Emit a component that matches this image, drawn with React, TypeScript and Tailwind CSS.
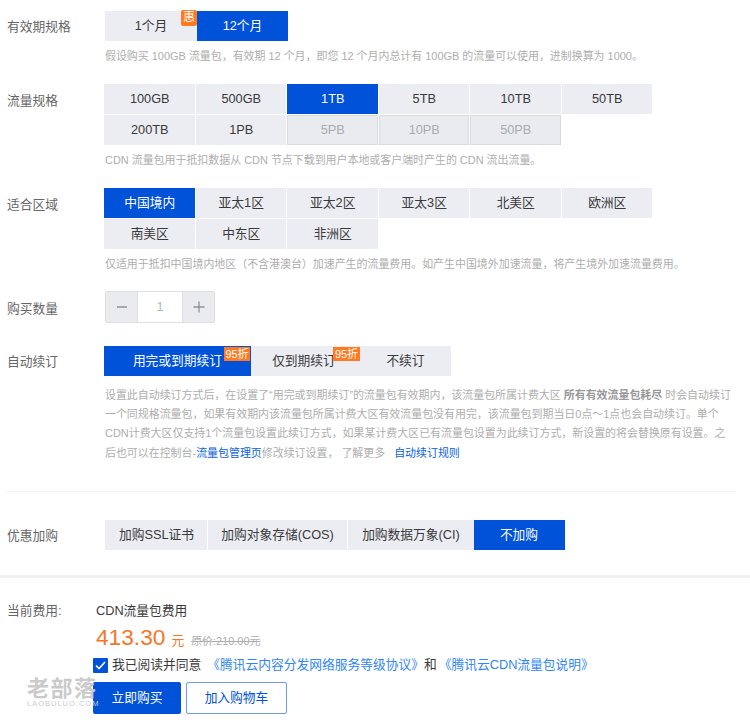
import React from "react";

const F = { fontFamily: '"Liberation Sans", "Noto Sans CJK SC", sans-serif' };

function Cell({ children, active, disabled, cls = "" }: { children: React.ReactNode; active?: boolean; disabled?: boolean; cls?: string }) {
  const tone = active
    ? "bg-[#0052d9] text-white"
    : disabled
      ? "bg-[#e9ebee] text-[#a8abb0] border border-[#d8dade]"
      : "bg-[#ebedf2] text-[#3a3a3a]";
  return <div className={`relative h-[30px] flex items-center justify-center text-[12.75px] whitespace-nowrap ${tone} ${cls}`}>{children}</div>;
}

function Badge({ children, cls = "" }: { children: React.ReactNode; cls?: string }) {
  return <span className={`absolute flex items-center justify-center bg-[#ff7a20] text-white leading-none ${cls}`}>{children}</span>;
}

function Row({ label, children, cls = "", labelCls = "pt-[1px]" }: { label: string; children: React.ReactNode; cls?: string; labelCls?: string }) {
  return (
    <div className={`flex ${cls}`}>
      <div className={`w-[104px] shrink-0 pl-[7px] h-[30px] flex items-center text-[12.75px] text-[#666666] ${labelCls}`}>{label}</div>
      <div className="flex-1 min-w-0">{children}</div>
    </div>
  );
}

function Hint({ children, cls = "" }: { children: React.ReactNode; cls?: string }) {
  return <p className={`text-[10.95px] leading-[18px] text-[#aeaeae] whitespace-nowrap pl-[1px] ${cls}`}>{children}</p>;
}

const specs1 = ["100GB", "500GB", "1TB", "5TB", "10TB", "50TB", "200TB", "1PB"];
const specs2 = ["5PB", "10PB", "50PB"];
const regions = ["中国境内", "亚太1区", "亚太2区", "亚太3区", "北美区", "欧洲区", "南美区", "中东区", "非洲区"];

export default function App() {
  return (
    <div style={F} className="w-[750px] h-[725px] overflow-hidden bg-white relative">
      <div className="pt-[11px]">
        <Row label="有效期规格">
          <div className="flex pl-[1px]">
            <Cell cls="w-[92px]">
              1个月
              <Badge cls="-top-[1px] right-0 w-[16px] h-[16px] rounded-[2px] text-[11.5px] bg-[#ff7a00]">惠</Badge>
            </Cell>
            <Cell active cls="w-[91px]">12个月</Cell>
          </div>
          <Hint cls="mt-[6px]">假设购买 100GB 流量包，有效期 12 个月，即您 12 个月内总计有 100GB 的流量可以使用，进制换算为 1000。</Hint>
        </Row>

        <Row label="流量规格" cls="mt-[19px]" labelCls="pt-[3px]">
          <div className="grid grid-cols-6 gap-[1px] w-[548px]">
            {specs1.map((s) => (
              <Cell key={s} active={s === "1TB"} cls="pl-[1px]">{s}</Cell>
            ))}
            {specs2.map((s) => (
              <Cell key={s} disabled cls="pl-[1px]">{s}</Cell>
            ))}
          </div>
          <Hint cls="mt-[6px]">CDN 流量包用于抵扣数据从 CDN 节点下载到用户本地或客户端时产生的 CDN 流出流量。</Hint>
        </Row>

        <Row label="适合区域" cls="mt-[19px]" labelCls="pt-[3px]">
          <div className="grid grid-cols-6 gap-[1px] w-[548px]">
            {regions.map((s) => (
              <Cell key={s} active={s === "中国境内"} cls="pl-[1px]">{s}</Cell>
            ))}
          </div>
          <Hint cls="mt-[6px]">仅适用于抵扣中国境内地区（不含港澳台）加速产生的流量费用。如产生中国境外加速流量，将产生境外加速流量费用。</Hint>
        </Row>

        <Row label="购买数量" cls="mt-[18px] items-center" labelCls="pt-[3px]">
          <div className="ml-[1px] flex w-[110px] h-[32px] rounded-[2px] border border-[#dcdfe3] text-[#a8abb0] overflow-hidden">
            <div className="w-[32px] bg-[#e9ebee] flex items-center justify-center border-r border-[#dcdfe3]">
              <svg width="12" height="12" viewBox="0 0 12 12"><path d="M1 6h10" stroke="#8f9296" strokeWidth="1.3" /></svg>
            </div>
            <div className="flex-1 bg-white flex items-center justify-center text-[12.75px] text-[#b4b6ba]">1</div>
            <div className="w-[32px] bg-[#e9ebee] flex items-center justify-center border-l border-[#dcdfe3]">
              <svg width="12" height="12" viewBox="0 0 12 12"><path d="M0.5 6h11M6 0.5v11" stroke="#8f9296" strokeWidth="1.3" /></svg>
            </div>
          </div>
        </Row>

        <Row label="自动续订" cls="mt-[23px]">
          <div className="flex">
            <Cell active cls="w-[147px]">
              <span>用完或到期续订</span>
              <Badge cls="top-[1px] right-[1px] w-[26px] h-[14px] text-[11px]">95折</Badge>
            </Cell>
            <Cell cls="w-[109px]">
              <span className="pr-[3px]">仅到期续订</span>
              <Badge cls="top-[1px] right-0 w-[27px] h-[14px] text-[11px]">95折</Badge>
            </Cell>
            <Cell cls="w-[91px]">不续订</Cell>
          </div>
          <div className="mt-[10px] pl-[1px] w-[640px] text-[10.95px] leading-[19px] text-[#aeaeae]">
            <div className="whitespace-nowrap">设置此自动续订方式后，在设置了“用完或到期续订”的流量包有效期内，该流量包所属计费大区 <b className="font-bold text-[#999999]">所有有效流量包耗尽</b> 时会自动续订</div>
            <div className="whitespace-nowrap">一个同规格流量包，如果有效期内该流量包所属计费大区有效流量包没有用完，该流量包到期当日0点～1点也会自动续订。单个</div>
            <div className="whitespace-nowrap">CDN计费大区仅支持1个流量包设置此续订方式，如果某计费大区已有流量包设置为此续订方式，新设置的将会替换原有设置。之</div>
            <div className="whitespace-nowrap mt-[1px]">后也可以在控制台-<span className="text-[#0a5fe0]">流量包管理页</span>修改续订设置， 了解更多 <span className="ml-[6px] text-[#0a5fe0]">自动续订规则</span></div>
          </div>
        </Row>

        <div className="mt-[28px] ml-[6px] w-[730px] h-[1px] bg-[#f1f2f3]" />

        <Row label="优惠加购" cls="mt-[28px]">
          <div className="flex pl-[1px] gap-[1px]">
            <Cell cls="w-[102px] pl-[1px]">加购SSL证书</Cell>
            <Cell cls="w-[139px]">加购对象存储(COS)</Cell>
            <Cell cls="w-[126px] -mr-[1px]">加购数据万象(CI)</Cell>
            <Cell active cls="w-[91px] pr-[1px]">不加购</Cell>
          </div>
        </Row>
      </div>

      <div className="mt-[25px] h-[3px] bg-[#eff0f4]" />

      <div className="flex pt-[24px]">
        <div className="w-[96px] shrink-0 pl-[7px] text-[12.75px] leading-[18px] text-[#666666]">当前费用:</div>
        <div className="text-[12.75px] leading-[18px] text-[#3a3a3a]">CDN流量包费用</div>
      </div>

      <div className="pl-[96px] mt-[4px] flex items-baseline h-[27px]">
        <span className="text-[22.7px] leading-[27px] text-[#f5762a]">413.30</span>
        <span className="ml-[6px] text-[12.75px] text-[#f5762a]">元</span>
        <span className="ml-[7px] text-[10.95px] text-[#aeaeae] line-through">原价:210.00元</span>
      </div>

      <div className="pl-[93px] mt-[6px] flex items-center h-[16px] text-[12.75px] whitespace-nowrap">
        <span className="w-[15px] h-[15px] rounded-[1px] bg-[#0052d9] flex items-center justify-center mr-[4px]">
          <svg width="11" height="9" viewBox="0 0 11 9"><path d="M1 4.5l3 3L10 1" fill="none" stroke="white" strokeWidth="1.6" /></svg>
        </span>
        <span className="text-[#3a3a3a]">我已阅读并同意</span>
        <span className="ml-[6px] text-[#2f86f6]">《腾讯云内容分发网络服务等级协议》</span>
        <span className="text-[#3a3a3a]">和</span>
        <span className="ml-[2px] text-[#2f86f6]">《腾讯云CDN流量包说明》</span>
      </div>

      <div className="pl-[93px] mt-[9px] flex gap-[5px]">
        <div className="w-[88px] h-[32px] rounded-[2px] bg-[#0052d9] text-white text-[12.75px] flex items-center justify-center">立即购买</div>
        <div className="w-[101px] h-[32px] rounded-[2px] border border-[#6f9be6] text-[#0052d9] text-[12.75px] flex items-center justify-center">加入购物车</div>
      </div>

      <div className="absolute left-[27px] top-[678px] w-[72px] text-[#cbcbcb]">
        <div className="text-[22px] leading-[21px] font-bold tracking-[1.5px] whitespace-nowrap">老部落</div>
        <div className="text-[7.5px] leading-[10px] tracking-[1px] whitespace-nowrap">LAOBULUO.COM</div>
      </div>
    </div>
  );
}
